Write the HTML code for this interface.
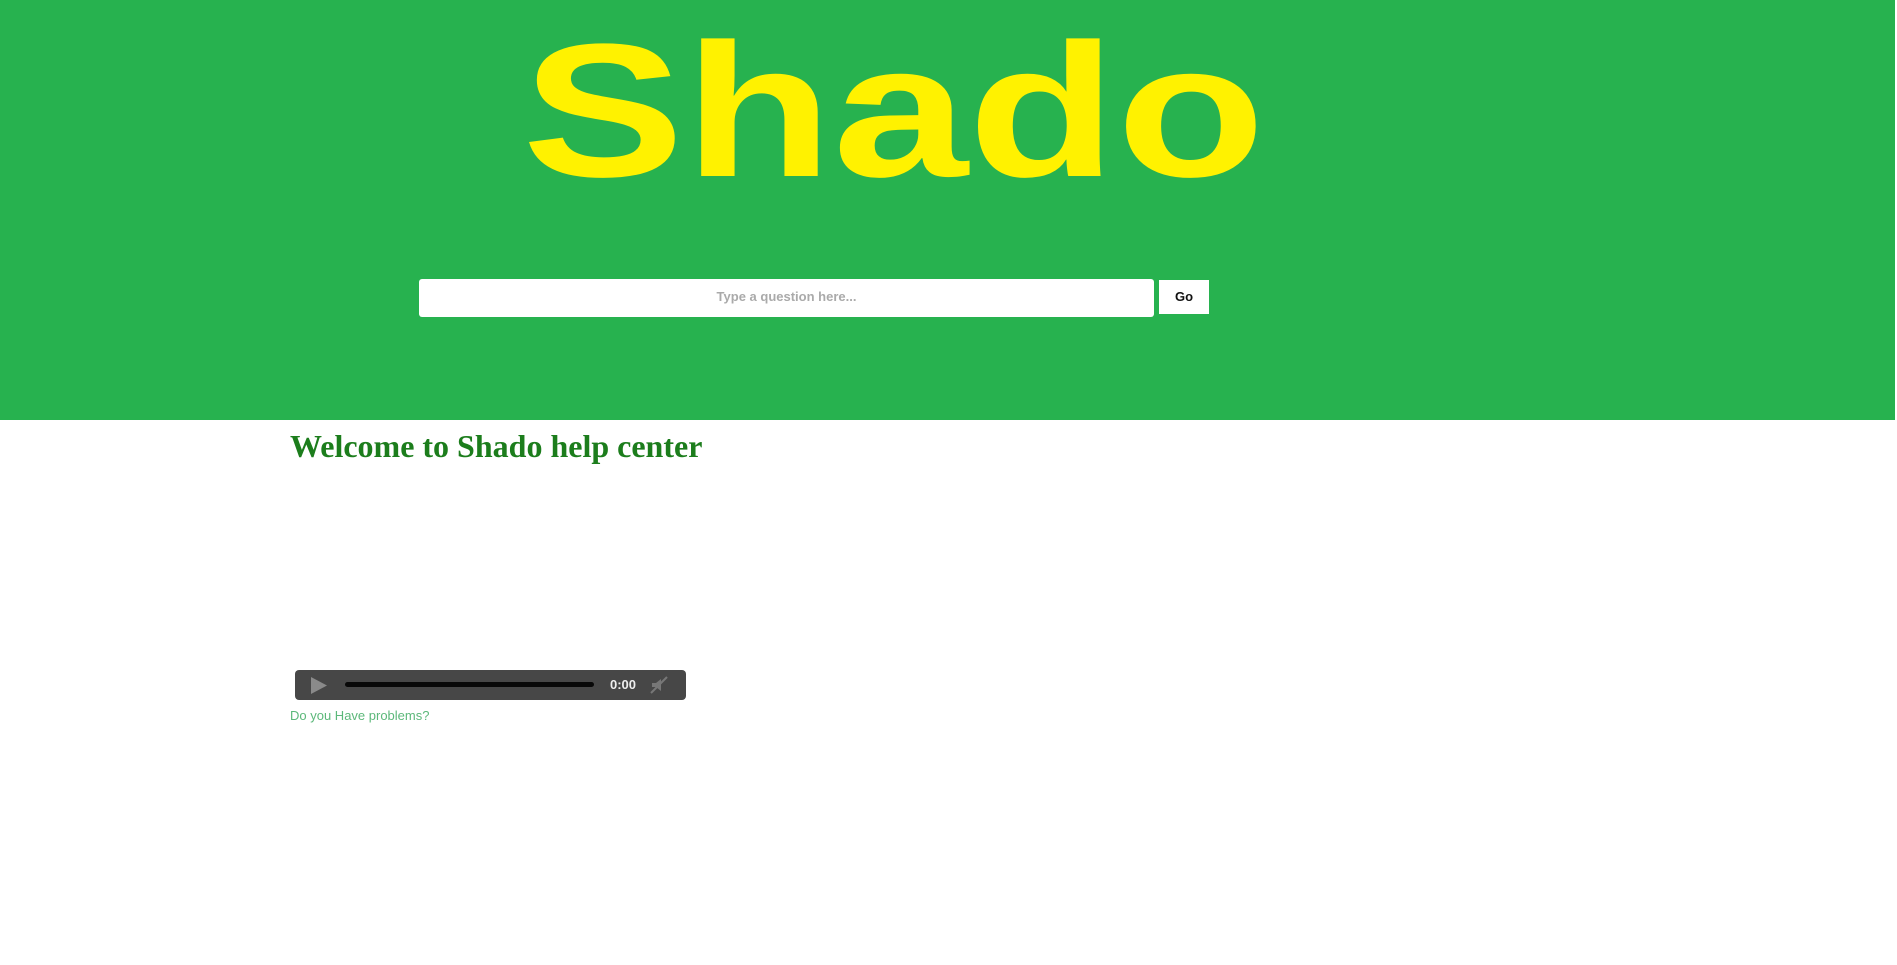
<!DOCTYPE html>
<html><head><meta charset="utf-8"><style>
html,body{margin:0;padding:0;width:1897px;height:965px;overflow:hidden;background:#fff}
.hdr{position:absolute;left:0;top:0;width:1895px;height:420px;background:#27b24f}
.logo{position:absolute;left:522px;top:16px;font-family:"Liberation Sans",sans-serif;font-weight:bold;font-size:190px;line-height:190px;color:#fff200;transform-origin:0 0;transform:scale(1.28,1);white-space:nowrap}
.inp{position:absolute;left:419px;top:279px;width:735px;height:38px;background:#fff;border-radius:3px;font:bold 13px "Liberation Sans",sans-serif;color:#aaa;text-align:center;line-height:36px}
.go{position:absolute;left:1159px;top:280px;width:50px;height:34px;background:#fff;font:bold 13px "Liberation Sans",sans-serif;color:#111;text-align:center;line-height:34px}
h1{position:absolute;left:290px;top:428px;margin:0;font:bold 32px "Liberation Serif",serif;color:#1c7d1c;white-space:nowrap}
.aud{position:absolute;left:295px;top:670px;width:391px;height:30px;background:#474747;border-radius:4px}
.bar{position:absolute;left:50px;top:12px;width:249px;height:5px;background:#080808;border-radius:3px}
.t{position:absolute;left:315px;top:7px;font:bold 13px "Liberation Sans",sans-serif;color:#eee}
a{position:absolute;left:290px;top:708px;font:13px "Liberation Sans",sans-serif;color:#5cb87a;text-decoration:none}
</style></head><body>
<div class="hdr">
<div class="logo">Shado</div>
<div class="inp">Type a question here...</div>
<div class="go">Go</div>
</div>
<h1>Welcome to Shado help center</h1>
<div class="aud">
<svg style="position:absolute;left:15px;top:7px" width="18" height="17"><path d="M1 0 L17 8.5 L1 17 Z" fill="#8a8a8a"/></svg>
<div class="bar"></div>
<div class="t">0:00</div>
<svg style="position:absolute;left:355px;top:6px" width="18" height="18"><path d="M2 7h4l5-4v12l-5-4H2z" fill="#777"/><path d="M1 17L17 1" stroke="#777" stroke-width="2"/></svg>
</div>
<a>Do you Have problems?</a>
</body></html>
